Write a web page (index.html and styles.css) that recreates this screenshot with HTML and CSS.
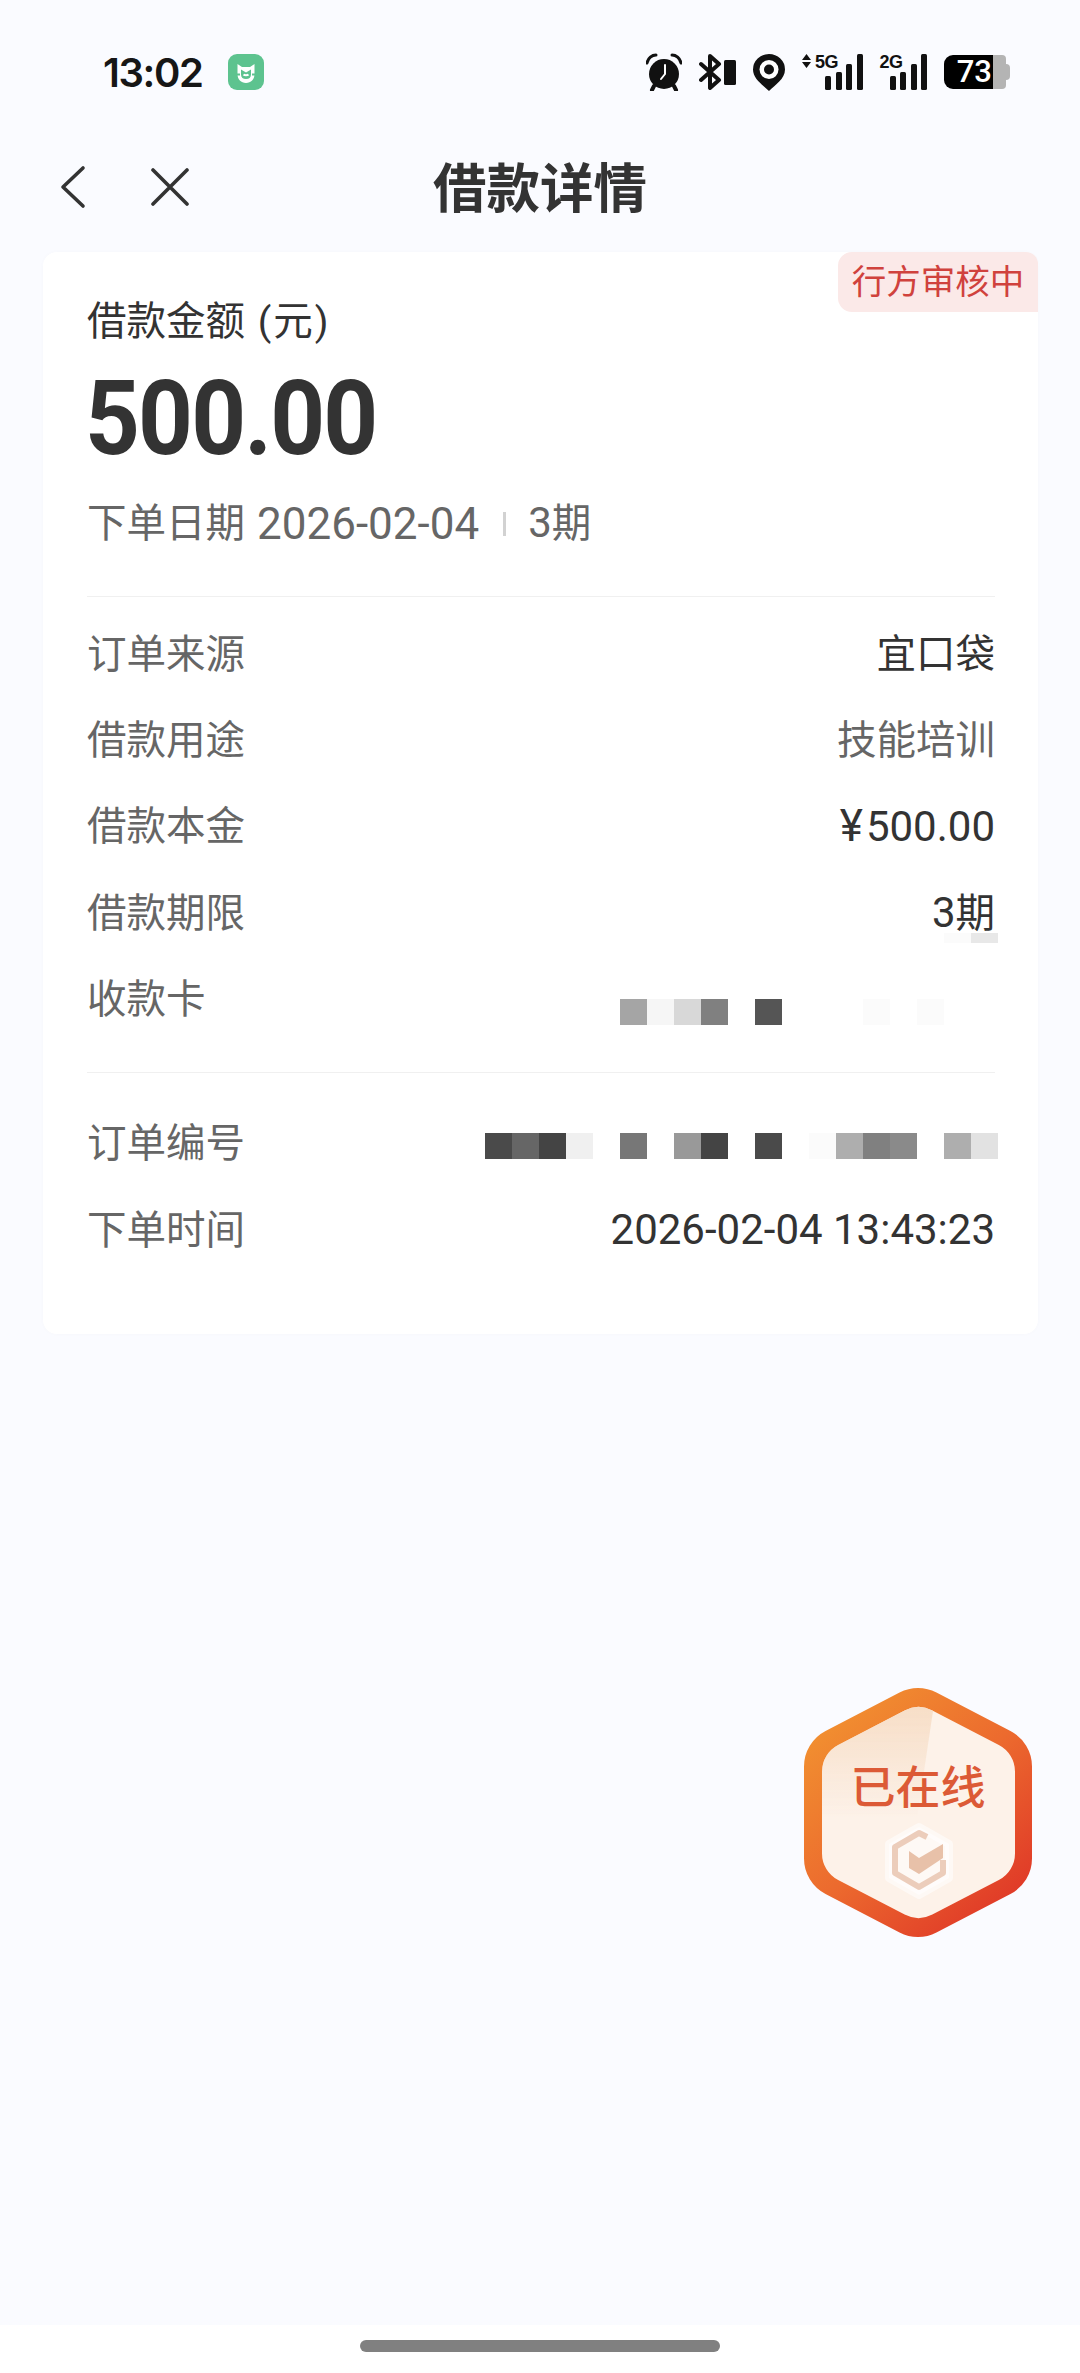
FILE: index.html
```html
<!DOCTYPE html>
<html>
  <head>
    <meta charset="UTF-8">
    <title>借款详情</title>
    <link rel="stylesheet" href="styles.css">
  </head>
  <body>
    <header class="status-bar">
      <div class="status-left">
        <span class="clock">13:02</span>
        <svg class="mi-icon" width="36" height="36" viewBox="0 0 36 36">
          <rect width="36" height="36" rx="9" fill="#5dc38f"/>
          <path d="M9.500 10l4.500 3h8l4.500-3v10c0 5.500-3.500 9-8.500 9s-8.500-3.500-8.500-9z" fill="#fff"/>
          <path d="M13 15.500l5 3 5-3v5c0 3-2 4.500-5 4.500s-5-1.500-5-4.500z" fill="#5dc38f"/>
          <path d="M15.500 20.500c1 1 4 1 5 0" fill="none" stroke="#fff" stroke-width="2"/>
          <path d="M8 20.500h4M24 20.500h4" stroke="#5dc38f" stroke-width="2"/>
        </svg>
      </div>
      <div class="status-right">
        <svg width="36" height="38" viewBox="0 0 36 38">
          <circle cx="18" cy="21" r="15" fill="#111"/>
          <path d="M1 10c1-5 5-8 9-8M35 10c-1-5-5-8-9-8" fill="none" stroke="#111" stroke-width="3" stroke-linecap="round"/>
          <path d="M8 33l-2 4M28 33l2 4" stroke="#111" stroke-width="4" stroke-linecap="round"/>
          <path d="M19 12v9l-4 5" fill="none" stroke="#fff" stroke-width="2" stroke-linecap="round"/>
        </svg>
        <svg width="37" height="36" viewBox="0 0 37 36">
          <path d="M2 10l18 16-9 8V2l9 8L2 26" fill="none" stroke="#111" stroke-width="4" stroke-linejoin="round" stroke-linecap="round"/>
          <rect x="25" y="6" width="12" height="25" rx="1.500" fill="#111"/>
        </svg>
        <svg width="32" height="37" viewBox="0 0 32 37">
          <path d="M16 37C10 31 0 25 0 15.500a16 15.500 0 0 1 32 0C32 25 22 31 16 37z" fill="#111"/>
          <circle cx="16" cy="15.500" r="9.500" fill="#fff"/>
          <circle cx="16" cy="15.500" r="5" fill="#111"/>
        </svg>
        <div class="signal">
          <svg width="9" height="14" viewBox="0 0 9 14">
            <path d="M0 6l4.500-6L9 6zM0 8l4.500 6L9 8z" fill="#111"/>
          </svg>
          <span class="net-text five-g">5G</span>
          <i class="bar b1"></i><i class="bar b2"></i><i class="bar b3"></i><i class="bar b4"></i>
        </div>
        <div class="signal">
          <span class="net-text">2G</span>
          <i class="bar b1"></i><i class="bar b2"></i><i class="bar b3"></i><i class="bar b4"></i>
        </div>
        <div class="battery">
          <span class="battery-level">73</span>
          <i class="battery-rest"></i>
          <i class="battery-nub"></i>
        </div>
      </div>
    </header>

    <nav class="nav-bar">
      <div class="nav-icons">
        <svg width="26" height="44" viewBox="0 0 26 44">
          <path d="M23 3L3 22l20 19" fill="none" stroke="#333" stroke-width="3.600" stroke-linecap="round" stroke-linejoin="round"/>
        </svg>
        <svg width="38" height="38" viewBox="0 0 38 38">
          <path d="M2 2l34 34M36 2L2 36" fill="none" stroke="#333" stroke-width="3.600" stroke-linecap="round"/>
        </svg>
      </div>
      <h1 class="page-title">借款详情</h1>
      <div></div>
    </nav>

    <main class="content">
      <section class="card">
        <div class="status-tag">行方审核中</div>
        <div class="amount-label">借款金额 <span class="unit">(元)</span></div>
        <div class="amount">500.00</div>
        <div class="order-meta">
          <span>下单日期</span>
          <span class="meta-date">2026-02-04</span>
          <i class="meta-sep"></i>
          <span><span class="num">3</span>期</span>
        </div>

        <div class="divider first"></div>

        <div class="row">
          <span class="row-label">订单来源</span>
          <span class="row-value">宜口袋</span>
        </div>
        <div class="row">
          <span class="row-label">借款用途</span>
          <span class="row-value muted">技能培训</span>
        </div>
        <div class="row">
          <span class="row-label">借款本金</span>
          <span class="row-value num"><span class="yen">¥</span>500.00</span>
        </div>
        <div class="row">
          <span class="row-label">借款期限</span>
          <span class="row-value"><span class="num">3</span>期</span>
          <div class="term-smudge"><i class="cell short g-fb"></i><i class="cell short g-e8"></i></div>
        </div>
        <div class="row">
          <span class="row-label">收款卡</span>
          <div class="mosaic card-no">
            <i class="cell g-a5"></i><i class="cell g-f6"></i><i class="cell g-d8"></i><i class="cell g-80"></i><i class="cell"></i><i class="cell g-55"></i><i class="cell"></i><i class="cell"></i><i class="cell"></i><i class="cell g-fb"></i><i class="cell"></i><i class="cell g-fb"></i><i class="cell"></i><i class="cell"></i>
          </div>
        </div>

        <div class="divider second"></div>

        <div class="row tall">
          <span class="row-label">订单编号</span>
          <div class="mosaic order-no">
            <i class="cell g-4a"></i><i class="cell g-66"></i><i class="cell g-44"></i><i class="cell g-f0"></i><i class="cell"></i><i class="cell g-77"></i><i class="cell"></i><i class="cell g-99"></i><i class="cell g-44"></i><i class="cell"></i><i class="cell g-4a"></i><i class="cell"></i><i class="cell g-fb"></i><i class="cell g-ae"></i><i class="cell g-80"></i><i class="cell g-8a"></i><i class="cell"></i><i class="cell g-ae"></i><i class="cell g-e2"></i>
          </div>
        </div>
        <div class="row tall">
          <span class="row-label">下单时间</span>
          <span class="row-value num">2026-02-04 13:43:23</span>
        </div>
      </section>
    </main>

    <div class="online-badge">
      <svg width="228" height="249" viewBox="0 0 228 249">
        <defs>
          <linearGradient id="ring" gradientUnits="userSpaceOnUse" x1="30" y1="30" x2="200" y2="220">
            <stop offset="0" stop-color="#f18e30"/>
            <stop offset="0.5" stop-color="#ec6a2e"/>
            <stop offset="1" stop-color="#e03a28"/>
          </linearGradient>
          <linearGradient id="wedge" x1="0" y1="0" x2="0" y2="1">
            <stop offset="0" stop-color="#f6dcc4"/>
            <stop offset="1" stop-color="#f6dcc4" stop-opacity="0"/>
          </linearGradient>
          <mask id="inner">
            <polygon points="114.500,49 181,83.600 181,165.400 114.500,200 48,165.400 48,83.600" fill="#fff" stroke="#fff" stroke-width="60" stroke-linejoin="round"/>
          </mask>
        </defs>
        <polygon points="114,40 188,78.500 188,170.500 114,209 40,170.500 40,78.500" fill="url(#ring)" stroke="url(#ring)" stroke-width="80" stroke-linejoin="round"/>
        <polygon points="114.500,49 181,83.600 181,165.400 114.500,200 48,165.400 48,83.600" fill="#fdf2e9" stroke="#fdf2e9" stroke-width="60" stroke-linejoin="round"/>
        <polygon points="10,10 129,10 129,23 113,130 10,130" fill="url(#wedge)" mask="url(#inner)"/>
        <polygon points="115,139 145,156 145,190 115,207 85,190 85,156" fill="#fff" fill-opacity="0.55" stroke="#fff" stroke-opacity="0.55" stroke-width="8" stroke-linejoin="round"/>
        <path d="M123 149l-8-4-24 14v26l24 14 24-14v-13" fill="none" stroke="#eccdbb" stroke-width="6" stroke-linejoin="round"/>
        <polygon points="105,163 115,170 139,156 139,170 115,186 105,180" fill="#e8c1a9"/>
      </svg>
      <span class="online-text">已在线</span>
    </div>

    <footer class="gesture-bar">
      <div class="gesture-handle"></div>
    </footer>
  </body>
</html>
```

FILE: styles.css
```css
* {
  box-sizing: border-box;
}
body {
  position: relative;
  display: flex;
  flex-direction: column;
  height: 2373px;
  margin: 0;
  overflow: hidden;
  background-color: #fafbff;
  color: #333;
  font-family: Roboto, "Noto Sans CJK SC", sans-serif;
}
svg {
  display: block;
  flex: none;
}

/* status bar */
.status-bar {
  display: flex;
  justify-content: space-between;
  align-items: center;
  height: 144px;
  padding: 0 70px 0 103px;
}
.status-left {
  display: flex;
  align-items: center;
  gap: 26px;
}
.clock {
  color: #161616;
  font-family: Inter, sans-serif;
  font-size: 40px;
  font-weight: 600;
  letter-spacing: -1.4px;
}
.status-right {
  display: flex;
  align-items: center;
  gap: 17px;
}
.signal {
  position: relative;
  display: flex;
  align-items: flex-end;
  gap: 4.500px;
  height: 36px;
}
.signal svg {
  position: absolute;
  top: 0;
  left: -23px;
}
.net-text {
  position: absolute;
  top: 0;
  left: -10px;
  color: #111;
  font-family: "Liberation Sans", sans-serif;
  font-size: 18px;
  font-weight: 700;
  letter-spacing: -0.5px;
  line-height: 16px;
}
.signal:first-of-type {
  margin-left: 23px;
}
.signal + .signal {
  margin-left: 10px;
}
.bar {
  width: 6px;
  border-radius: 1.500px;
  background-color: #111;
}
.b1 { height: 14px; }
.b2 { height: 18px; }
.b3 { height: 26px; }
.b4 { height: 36px; }
.battery {
  display: flex;
  align-items: center;
  height: 34px;
}
.battery-level {
  width: 49px;
  height: 34px;
  padding-right: 1px;
  border-radius: 9px 0 0 9px;
  background-color: #000;
  color: #fff;
  font-size: 31px;
  font-weight: 500;
  line-height: 34px;
  text-align: right;
}
.battery-rest {
  width: 13px;
  height: 34px;
  border-radius: 0 4px 4px 0;
  background-color: #b4b4b4;
}
.battery-nub {
  width: 4px;
  height: 16px;
  border-radius: 0 4px 4px 0;
  background-color: #b4b4b4;
}

/* nav */
.nav-bar {
  display: grid;
  grid-template-columns: 1fr auto 1fr;
  align-items: center;
  height: 86px;
  margin-bottom: 22px;
}
.nav-icons {
  display: flex;
  align-items: center;
  gap: 65px;
  padding-left: 60px;
}
.page-title {
  margin: 0 0 5px;
  color: #333;
  font-size: 53.500px;
  font-weight: 700;
}

/* card */
.content {
  flex: 1;
  padding: 0 42px 0 43px;
}
.card {
  position: relative;
  padding: 44px 43px 64px 44px;
  border-radius: 14px;
  background-color: #fff;
  box-shadow: 0 0 4px rgba(0, 0, 0, 0.02);
}
.status-tag {
  position: absolute;
  top: 0;
  right: 0;
  width: 200px;
  height: 60px;
  border-radius: 14px 12px 0 14px;
  background-color: #fbe9e8;
  color: #d0423d;
  font-size: 34.500px;
  line-height: 60px;
  text-align: center;
}
.amount-label {
  font-size: 39.500px;
  line-height: 52px;
  word-spacing: 3px;
}
.unit {
  letter-spacing: 2px;
}
.amount {
  margin: 21px 0 0 -2px;
  color: #333;
  font-size: 103px;
  font-weight: 700;
  letter-spacing: -2px;
  line-height: 100px;
  transform: scaleX(0.93);
  transform-origin: left center;
}
.order-meta {
  display: flex;
  align-items: center;
  gap: 12px;
  margin-top: 28px;
  color: #666;
  font-size: 39.500px;
  line-height: 52px;
}
.num {
  font-size: 42px;
}
.meta-date {
  font-size: 44px;
}
.meta-sep {
  width: 3px;
  height: 24px;
  margin: 0 10px 0 12px;
  background-color: #d2d2d2;
}
.divider {
  height: 1px;
  background-color: #f0f0f0;
}
.divider.first {
  margin: 46px 0 10px;
}
.divider.second {
  margin: 33px 0 23px;
}
.row {
  position: relative;
  display: flex;
  justify-content: space-between;
  align-items: center;
  height: 86.400px;
  font-size: 39.500px;
}
.row.tall {
  height: 87px;
}
.row-label {
  color: #666;
}
.row-value {
  color: #333;
}
.row-value.muted {
  color: #666;
}
.row-value.num {
  margin-top: 6px;
}
.yen {
  margin-right: 3px;
  font-size: 44px;
}
.mosaic {
  display: flex;
  margin-right: -3px;
}
.card-no {
  margin-top: 32px;
}
.order-no {
  margin-top: 14px;
}
.cell {
  width: 27px;
  height: 26px;
}
.cell.short {
  height: 10px;
}
.term-smudge {
  position: absolute;
  right: -3px;
  bottom: 10px;
  display: flex;
}
.g-fb { background-color: #fbfbfb; }
.g-f6 { background-color: #f6f6f6; }
.g-f0 { background-color: #f0f0f0; }
.g-e8 { background-color: #e8e8e8; }
.g-e2 { background-color: #e2e2e2; }
.g-d8 { background-color: #d8d8d8; }
.g-ae { background-color: #aeaeae; }
.g-a5 { background-color: #a5a5a5; }
.g-99 { background-color: #999; }
.g-8a { background-color: #8a8a8a; }
.g-80 { background-color: #808080; }
.g-77 { background-color: #777; }
.g-66 { background-color: #666; }
.g-55 { background-color: #555; }
.g-4a { background-color: #4a4a4a; }
.g-44 { background-color: #444; }

/* floating badge */
.online-badge {
  position: absolute;
  top: 1688px;
  left: 804px;
  width: 228px;
  height: 249px;
}
.online-text {
  position: absolute;
  top: 73px;
  left: 0;
  width: 100%;
  color: #dc5a36;
  font-size: 45px;
  font-weight: 500;
  line-height: 56px;
  text-align: center;
}

/* gesture bar */
.gesture-bar {
  height: 48px;
  padding-top: 15px;
  background-color: #fff;
}
.gesture-handle {
  width: 360px;
  height: 12px;
  margin: 0 auto;
  border-radius: 6px;
  background-color: #808080;
}
```
